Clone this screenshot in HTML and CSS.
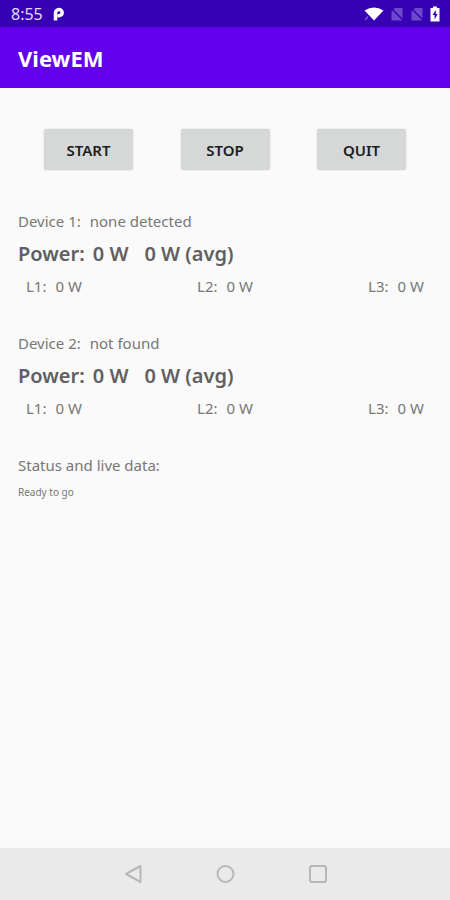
FILE: index.html
```html
<!DOCTYPE html>
<html lang="en">
<head>
    <meta charset="UTF-8">
    <meta name="viewport" content="width=device-width, initial-scale=1.0">
    <title>ViewEM</title>
    <link rel="stylesheet" href="styles.css">
</head>
<body>

    <div class="status-bar">
        <span class="clock">8:55</span>
        <svg class="p-icon" width="12" height="14" viewBox="0 0 12 14" fill="none" stroke="#fff" stroke-width="3.500">
            <path d="M2.500 13.500V6A3.500 3.500 0 0 1 6 2.500A3 3 0 0 1 6 8.800H4.500"/>
        </svg>
        <div class="status-icons">
            <svg width="20" height="14" viewBox="0 0 20 14">
                <path d="M0.500 3.500Q10 -2.500 19.500 3.500L10 13.500Z" fill="#fff"/>
                <path d="M1 13L4 9.500" stroke="#7a5ad0" stroke-width="1.500"/>
            </svg>
            <svg width="14" height="14" viewBox="0 0 14 14">
                <path d="M5 1H12.500V13.500H1.500V4.500Z" fill="#6d48cc"/>
                <path d="M1 1L13.500 13.500" stroke="#3700b3" stroke-width="1.500"/>
            </svg>
            <svg width="14" height="14" viewBox="0 0 14 14">
                <path d="M5 1H12.500V13.500H1.500V4.500Z" fill="#6d48cc"/>
                <path d="M1 1L13.500 13.500" stroke="#3700b3" stroke-width="1.500"/>
            </svg>
            <svg width="10" height="16" viewBox="0 0 10 16">
                <path d="M3 0.500H7V2H9.500V15.500H0.500V2H3Z" fill="#fff"/>
                <path d="M5.800 4L2.500 9H4.600V13.500L7.700 8H5.800Z" fill="#3700b3"/>
            </svg>
        </div>
    </div>

    <header class="app-bar">
        <h1>ViewEM</h1>
    </header>

    <main>
        <div class="buttons">
            <button type="button">START</button>
            <button type="button">STOP</button>
            <button type="button">QUIT</button>
        </div>

        <section class="device">
            <div class="line"><span>Device 1:</span><span>none detected</span></div>
            <div class="line power"><span>Power:</span><span class="value">0 W</span><span>0 W (avg)</span></div>
            <div class="phases">
                <div class="line"><span>L1:</span><span>0 W</span></div>
                <div class="line"><span>L2:</span><span>0 W</span></div>
                <div class="line"><span>L3:</span><span>0 W</span></div>
            </div>
        </section>

        <section class="device">
            <div class="line"><span>Device 2:</span><span>not found</span></div>
            <div class="line power"><span>Power:</span><span class="value">0 W</span><span>0 W (avg)</span></div>
            <div class="phases">
                <div class="line"><span>L1:</span><span>0 W</span></div>
                <div class="line"><span>L2:</span><span>0 W</span></div>
                <div class="line"><span>L3:</span><span>0 W</span></div>
            </div>
        </section>

        <section class="log">
            <div class="line">Status and live data:</div>
            <div class="message">Ready to go</div>
        </section>
    </main>

    <nav class="nav-bar">
        <button type="button" class="nav-button" aria-label="Back">
            <svg width="20" height="20" viewBox="0 0 20 20"><path d="M17.500 2V18L3 10Z"/></svg>
        </button>
        <button type="button" class="nav-button" aria-label="Home">
            <svg width="20" height="20" viewBox="0 0 20 20"><circle cx="10.500" cy="10" r="8"/></svg>
        </button>
        <button type="button" class="nav-button" aria-label="Recent apps">
            <svg width="20" height="20" viewBox="0 0 20 20"><rect x="3" y="2" width="16" height="16" rx="2"/></svg>
        </button>
    </nav>

</body>
</html>
```

FILE: styles.css
```css
* {
    box-sizing: border-box;
}

body {
    margin: 0;
    min-height: 100vh;
    display: flex;
    flex-direction: column;
    font-family: 'Noto Sans', sans-serif;
    font-size: 15px;
    color: #777;
    background-color: #fafafa;
}

.status-bar {
    display: flex;
    align-items: center;
    height: 27px;
    padding: 0 10px 0 11px;
    background-color: #3700b3;
    color: #e4dcf6;
}

.clock {
    font-size: 16px;
}

.p-icon {
    margin-left: 10px;
}

.status-icons {
    display: flex;
    align-items: center;
    gap: 6px;
    margin-left: auto;
}

.app-bar {
    display: flex;
    align-items: center;
    height: 61px;
    padding: 0 18px;
    background-color: #6200ee;
    color: #fff;
}

h1 {
    margin: 0;
    font-size: 22px;
    font-weight: 700;
}

main {
    flex: 1;
}

.buttons {
    display: flex;
    justify-content: space-between;
    padding: 41px 44px 0;
    margin-bottom: 35px;
}

.buttons button {
    width: 89px;
    height: 41px;
    padding: 0;
    border: none;
    border-radius: 2px;
    background-color: #d6d7d7;
    box-shadow: 0 0 2px rgba(0, 0, 0, 0.15);
    color: #1c1c1c;
    font-family: inherit;
    font-size: 15px;
    font-weight: 600;
    cursor: pointer;
}

.device {
    margin-bottom: 25px;
}

.line {
    display: flex;
    gap: 9px;
    line-height: 32px;
}

.device > .line,
.log {
    padding: 0 18px;
}

.power {
    gap: 8px;
    line-height: 33px;
    font-size: 20px;
    font-weight: 600;
    color: #606060;
}

.value {
    margin-right: 8px;
}

.phases {
    display: flex;
    justify-content: space-between;
    padding: 0 26px;
}

.message {
    font-size: 10px;
    line-height: 22px;
}

.nav-bar {
    display: flex;
    justify-content: center;
    align-items: center;
    gap: 72px;
    height: 52px;
    background-color: #eaeaea;
}

.nav-button {
    display: flex;
    padding: 0;
    border: none;
    background: none;
    cursor: pointer;
}

.nav-button svg {
    fill: none;
    stroke: #b8b8b8;
    stroke-width: 2;
    stroke-linejoin: round;
}
```
